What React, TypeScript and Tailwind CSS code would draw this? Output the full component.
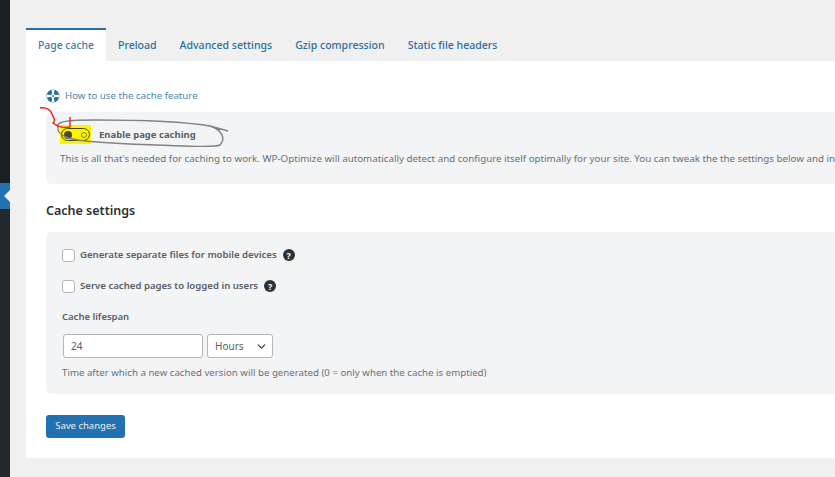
import { ChevronDown } from 'lucide-react';

const TABS = ['Page cache', 'Preload', 'Advanced settings', 'Gzip compression', 'Static file headers'];

function HelpIcon() {
  return (
    <span className="ml-[6px] flex h-[12px] w-[12px] shrink-0 items-center justify-center rounded-full bg-[#2c3338] text-[9px] leading-none font-bold text-white">
      ?
    </span>
  );
}

function CheckRow({ label }: { label: string }) {
  return (
    <div className="flex h-[14px] items-center">
      <span className="h-[13px] w-[13px] shrink-0 rounded-[3px] border border-[#b4b6b9] bg-white" />
      <span className="ml-[5px] text-[9.6px] font-semibold whitespace-nowrap text-[#5a6066]">{label}</span>
      <HelpIcon />
    </div>
  );
}

function Annotations() {
  return (
    <svg className="absolute top-[100px] left-[36px]" width="210" height="52" viewBox="0 0 210 52" fill="none">
      <path
        d="M22 28 C19 21 32 20 60 20 C100 20 150 22 174 26 L192 31 M174 26 C186 30 190 38 184 45 C178 48 150 46 120 45 C90 44 50 43 32 38 C25 35 21 32 22 28"
        stroke="#808285"
        strokeWidth="1.4"
      />
      <path d="M4 8 C10 7 14 9 16 14 C18 19 20 20 17 23 C22 27 28 28 34 27 L34 17" stroke="#ee2222" strokeWidth="1.4" />
    </svg>
  );
}

export default function App() {
  return (
    <div className="relative flex h-[477px] w-[835px] overflow-hidden bg-[#f0f0f1] font-['Noto_Sans',sans-serif]">
      <aside className="flex w-[10px] shrink-0 flex-col bg-[#1d2327]">
        <div className="h-[183px] bg-[#1a1f23]" />
        <div className="relative h-[26px] bg-[#2271b1]">
          <span className="absolute top-[7px] right-0 h-0 w-0 border-y-[6px] border-r-[6px] border-y-transparent border-r-[#f0f0f1]" />
        </div>
        <div className="flex-1 bg-[#23282d]" />
      </aside>

      <main className="ml-[16px] min-w-0 flex-1 pt-[28px]">
        <nav className="flex h-[33px] items-stretch">
          {TABS.map((tab, i) => (
            <div
              key={tab}
              className={
                i === 0
                  ? 'mr-[0.5px] flex w-[80px] items-center justify-center border-t-2 border-[#2271b1] bg-white pt-[1px] text-[10.4px] font-medium whitespace-nowrap text-[#3f7ba3]'
                  : 'flex items-center px-[11.5px] pt-[3px] text-[10.55px] font-medium whitespace-nowrap text-[#2c6f9e]'
              }
            >
              {tab}
            </div>
          ))}
        </nav>

        <section className="h-[397px] w-[809px] bg-white pt-[28px] pl-[20px]">
          <a className="flex h-[14px] items-center text-[9.7px] whitespace-nowrap text-[#4f86a8]">
            <svg className="mr-[5px] shrink-0" width="14" height="14" viewBox="0 0 14 14">
              <circle cx="7" cy="7" r="6.5" fill="#2b6f9f" />
              <circle cx="7" cy="7" r="2.2" fill="#ffffff" />
              <path d="M5.6 1 L8.4 1 L7.8 5 L6.2 5 Z M5.6 13 L8.4 13 L7.8 9 L6.2 9 Z M1 5.6 L1 8.4 L5 7.8 L5 6.2 Z M13 5.6 L13 8.4 L9 7.8 L9 6.2 Z" fill="#ffffff" />
              <circle cx="7" cy="7" r="0.9" fill="#2b6f9f" />
            </svg>
            How to use the cache feature
          </a>

          <div className="mt-[9px] h-[72px] overflow-hidden rounded-l-[5px] bg-[#f3f4f6] pt-[13px] pl-[14px]">
            <div className="flex h-[19px] items-center">
              <span className="flex h-[19px] w-[31px] shrink-0 items-center justify-center bg-[#fdf200]">
                <span className="flex h-[13px] w-[29px] items-center justify-between rounded-full border border-[#4a4a20] px-[2px]">
                  <span className="h-[8px] w-[8px] rounded-full bg-[#4a4a20]" />
                  <span className="h-[6px] w-[6px] rounded-full border border-[#80802a]" />
                </span>
              </span>
              <span className="ml-[8px] pt-[1px] text-[9.5px] font-bold whitespace-nowrap text-[#5a6066]">Enable page caching</span>
            </div>
            <p className="mt-[8px] text-[9.75px] whitespace-nowrap text-[#6b7076]">
              This is all that's needed for caching to work. WP-Optimize will automatically detect and configure itself optimally for your site. You can tweak the the settings below and in
            </p>
          </div>

          <h2 className="mt-[17px] h-[20px] text-[12.5px] leading-[20px] font-semibold text-[#2a2f34]">Cache settings</h2>

          <div className="mt-[11px] h-[162px] rounded-l-[5px] bg-[#f3f4f6] pt-[16px] pl-[16px]">
            <CheckRow label="Generate separate files for mobile devices" />
            <div className="mt-[17px]">
              <CheckRow label="Serve cached pages to logged in users" />
            </div>
            <div className="mt-[17px] text-[9.5px] leading-[14px] font-semibold text-[#5a6066]">Cache lifespan</div>
            <div className="mt-[10px] flex gap-[4px] pl-[1px]">
              <div className="flex h-[24px] w-[140px] items-center rounded-[3px] border-[1.5px] border-[#b4b6b9] bg-white pl-[7px] text-[10px] text-[#5a6066]">
                24
              </div>
              <div className="flex h-[24px] w-[66px] items-center justify-between rounded-[3px] border-[1.5px] border-[#b4b6b9] bg-white pr-[4px] pl-[7px] text-[10px] text-[#5a6066]">
                Hours
                <ChevronDown size={13} strokeWidth={2.5} className="text-[#3c434a]" />
              </div>
            </div>
            <p className="mt-[8px] text-[9.7px] leading-[14px] whitespace-nowrap text-[#6b7076]">
              Time after which a new cached version will be generated (0 = only when the cache is emptied)
            </p>
          </div>

          <button
            type="button"
            className="mt-[21px] flex h-[23px] w-[79px] items-center justify-center rounded-[3px] bg-[#2271b1] text-[9.5px] text-[#e8f0f6]"
          >
            Save changes
          </button>
        </section>
      </main>

      <Annotations />
    </div>
  );
}
